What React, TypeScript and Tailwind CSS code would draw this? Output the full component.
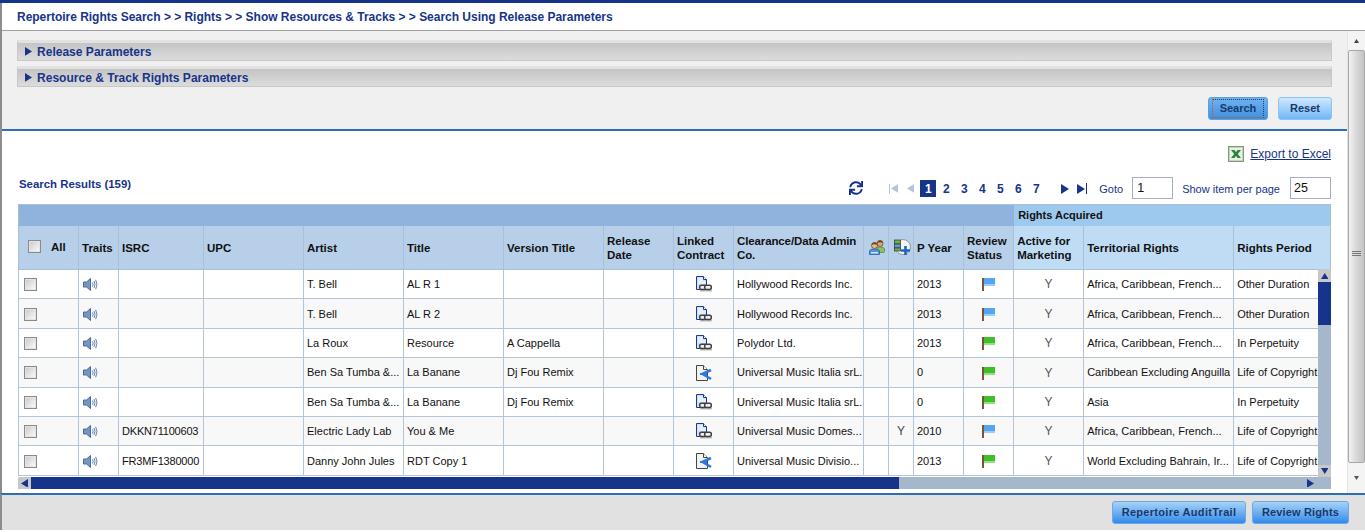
import { FaSync } from "react-icons/fa";

const NAVY = "#16348a";

const widths = [
  "w-[61px]", "w-[40px]", "w-[85px]", "w-[100px]", "w-[100px]", "w-[100px]", "w-[100px]", "w-[70px]", "w-[60px]",
  "w-[130px]", "w-[25px]", "w-[25px]", "w-[50px]", "w-[50px]", "w-[70px]", "w-[150px]", "w-[97px]",
];

type Row = {
  h: string; isrc: string; artist: string; title: string; version: string; contract: "link" | "share"; admin: string;
  y: string; year: string; flag: "blue" | "green"; terr: string; period: string;
};

const rows: Row[] = [
  { h: "h-[29px]", isrc: "", artist: "T. Bell", title: "AL R 1", version: "", contract: "link", admin: "Hollywood Records Inc.", y: "", year: "2013", flag: "blue", terr: "Africa, Caribbean, French...", period: "Other Duration" },
  { h: "h-[30px] [&>td]:pt-[1px]", isrc: "", artist: "T. Bell", title: "AL R 2", version: "", contract: "link", admin: "Hollywood Records Inc.", y: "", year: "2013", flag: "blue", terr: "Africa, Caribbean, French...", period: "Other Duration" },
  { h: "h-[29px]", isrc: "", artist: "La Roux", title: "Resource", version: "A Cappella", contract: "link", admin: "Polydor Ltd.", y: "", year: "2013", flag: "green", terr: "Africa, Caribbean, French...", period: "In Perpetuity" },
  { h: "h-[30px]", isrc: "", artist: "Ben Sa Tumba &...", title: "La Banane", version: "Dj Fou Remix", contract: "share", admin: "Universal Music Italia srL.", y: "", year: "0", flag: "green", terr: "Caribbean Excluding Anguilla", period: "Life of Copyright" },
  { h: "h-[29px]", isrc: "", artist: "Ben Sa Tumba &...", title: "La Banane", version: "Dj Fou Remix", contract: "link", admin: "Universal Music Italia srL.", y: "", year: "0", flag: "green", terr: "Asia", period: "In Perpetuity" },
  { h: "h-[29px]", isrc: "DKKN71100603", artist: "Electric Lady Lab", title: "You & Me", version: "", contract: "link", admin: "Universal Music Domes...", y: "Y", year: "2010", flag: "blue", terr: "Africa, Caribbean, French...", period: "Life of Copyright" },
  { h: "h-[30px] [&>td]:pt-[1px]", isrc: "FR3MF1380000", artist: "Danny John Jules", title: "RDT Copy 1", version: "", contract: "share", admin: "Universal Music Divisio...", y: "", year: "2013", flag: "green", terr: "World Excluding Bahrain, Ir...", period: "Life of Copyright" },
];

function Speaker() {
  return (
    <svg width="15" height="13" viewBox="0 0 15 13" className="block">
      <path d="M0.5 4H3.5L7.5 0.5V12.5L3.5 9H0.5Z" fill="#7596c2" stroke="#4a6a9c" strokeWidth="1" />
      <path d="M9.5 4.5Q10.7 6.5 9.5 8.5M11 3Q13 6.5 11 10M12.7 1.8Q15.2 6.5 12.7 11.2" fill="none" stroke="#5f82b3" strokeWidth="1" />
    </svg>
  );
}

function DocIcon({ share }: { share: boolean }) {
  if (share) {
    return (
      <svg width="16" height="16" viewBox="0 0 16 16" className="block">
        <path d="M0.5 0.5H7.5L11.5 4.5V15.5H0.5Z" fill="#f2f2f2" stroke="#444" strokeWidth="1" />
        <path d="M7.5 0.5V4.5H11.5" fill="#fff" stroke="#444" strokeWidth="1" />
        <path d="M15 5L6.5 9L15 14" fill="none" stroke="#2f78e0" strokeWidth="2.6" />
        <path d="M4 9H11" fill="none" stroke="#2f78e0" strokeWidth="2" />
      </svg>
    );
  }
  return (
    <svg width="16" height="16" viewBox="0 0 16 16" className="block">
      <path d="M0.5 0.5H7.5L10.5 3.5V13.5H0.5Z" fill="#cfe1f7" stroke="#1b3a8f" strokeWidth="1" />
      <path d="M2 2H7V5H9.5V8H2Z" fill="#e6f0fb" />
      <path d="M7.5 0.5V3.5H10.5" fill="#fff" stroke="#1b3a8f" strokeWidth="1" />
      <rect x="4" y="14" width="12" height="1.5" fill="#bdbdbd" />
      <g fill="#eee" stroke="#3f3f3f" strokeWidth="1.5">
        <rect x="3.7" y="9.2" width="6.6" height="4.2" rx="1.6" />
        <rect x="8.7" y="9.2" width="6.6" height="4.2" rx="1.6" />
      </g>
    </svg>
  );
}

function Flag({ color }: { color: "blue" | "green" }) {
  return (
    <svg width="13" height="14" viewBox="0 0 13 14" className="block">
      <rect x="0" y="1" width="2" height="13" fill="#7a5534" />
      <rect x="2" y="1" width="11" height="8" fill={color === "blue" ? "#55a6f2" : "#3fbf2a"} />
      <rect x="2" y="7" width="11" height="2" fill={color === "blue" ? "#9ccdf7" : "#93e07e"} />
    </svg>
  );
}

function People() {
  return (
    <svg width="16" height="15" viewBox="0 0 16 15" className="block">
      <circle cx="11" cy="3.5" r="3" fill="#d8a878" stroke="#6e4524" strokeWidth="0.8" />
      <path d="M8 3Q9 0 11 0.5Q14 0.5 14 3Q11 1.5 8 3Z" fill="#6e4524" />
      <path d="M7.5 12.5V9Q7.5 7 11 7Q15.5 7 15.5 9V11.5Q15.5 12.5 14 12.5Z" fill="#94bd5e" stroke="#5c8a36" strokeWidth="0.8" />
      <circle cx="5.5" cy="5.5" r="3" fill="#e8b98a" stroke="#6e4524" strokeWidth="0.8" />
      <path d="M2.5 5Q3 2 5.5 2.5Q8.5 2.5 8.5 5Q5.5 3.5 2.5 5Z" fill="#6e4524" />
      <path d="M0.5 14.5V11Q0.5 9 5.5 9Q10.5 9 10.5 11V14.5Z" fill="#4f95e2" stroke="#2a5fa8" strokeWidth="0.8" />
      <path d="M2 12H9V13.5H2Z" fill="#cfe4fa" />
    </svg>
  );
}

function AddMap() {
  return (
    <svg width="17" height="17" viewBox="0 0 17 17" className="block">
      <circle cx="9" cy="8" r="7.5" fill="#f4f4f4" stroke="#888" strokeWidth="0.8" />
      <rect x="0.5" y="1" width="6" height="4" fill="#6fb24a" stroke="#333" strokeWidth="0.7" />
      <rect x="0.5" y="5" width="6" height="4" fill="#5e9ad8" stroke="#333" strokeWidth="0.7" />
      <rect x="0.5" y="9" width="6" height="3" fill="#6fb24a" stroke="#333" strokeWidth="0.7" />
      <path d="M11.5 7V16M7 11.5H16" stroke="#1e64c0" strokeWidth="2.6" />
    </svg>
  );
}

function Excel() {
  return (
    <svg width="16" height="16" viewBox="0 0 16 16" className="block">
      <rect x="0" y="0" width="16" height="16" fill="#7c9a76" />
      <rect x="1" y="1" width="14" height="14" fill="#c3d6bb" />
      <rect x="2" y="2" width="12" height="12" fill="#e9f1e5" />
      <path d="M3 4H6.5L8 6.3L9.5 4H13L9.8 8L13 12H9.5L8 9.7L6.5 12H3L6.2 8Z" fill="#2d8440" />
    </svg>
  );
}

function Tri({ dir, fill, size = 8 }: { dir: "l" | "r" | "u" | "d"; fill: string; size?: number }) {
  const d = { l: "M8 0V10L0 5Z", r: "M0 0V10L8 5Z", u: "M0 8H10L5 0Z", d: "M0 0H10L5 8Z" }[dir];
  const vb = dir === "l" || dir === "r" ? "0 0 8 10" : "0 0 10 8";
  const w = dir === "l" || dir === "r" ? size : size * 1.25;
  const h = dir === "l" || dir === "r" ? size * 1.25 : size;
  return (
    <svg width={w} height={h} viewBox={vb} className="block">
      <path d={d} fill={fill} />
    </svg>
  );
}

function Accordion({ label }: { label: string }) {
  return (
    <div className="flex h-[21px] items-center border border-[#c8c8c8] border-t-[3px] border-t-[#e2e2e2] bg-gradient-to-b from-[#c4c4c4] to-[#dcdcdc] pl-[7px]">
      <Tri dir="r" fill={NAVY} size={7} />
      <span className="ml-[5px] text-[12px] font-bold tracking-[0.02px] text-[#16348a]">{label}</span>
    </div>
  );
}

function Check({ className = "" }: { className?: string }) {
  return (
    <input
      type="checkbox"
      aria-label="select"
      className={`block h-[13px] w-[13px] appearance-none border border-[#8a8a8a] bg-gradient-to-br from-[#c8c8c8] to-[#ffffff] shadow-[inset_0_0_0_1px_#e4e4e4] ${className}`}
    />
  );
}

const th = "border-r border-b border-[#a9c0da] px-[3px] text-left align-middle font-bold text-[11.5px] leading-[14px] text-[#111]";
const td = "border-r border-b border-[#b5c5d8] px-[3px] align-middle whitespace-nowrap overflow-hidden";

export default function App() {
  return (
    <div className="flex h-[532px] w-[1365px] flex-col overflow-hidden border-t-[3px] border-t-[#16348a] bg-white font-['Liberation_Sans',Arial,sans-serif] text-[11px] text-[#111]">
      <div className="flex min-h-0 flex-1 flex-col border-l-2 border-l-[#8c8c8c]">
        <div className="flex h-[28px] shrink-0 items-center border-b border-b-[#a0a0a0] pl-[15px] text-[12px] font-bold tracking-[-0.02px] text-[#16348a]">
          Repertoire Rights Search &gt; &gt; Rights &gt; &gt; Show Resources &amp; Tracks &gt; &gt; Search Using Release Parameters
        </div>
        <div className="flex min-h-0 flex-1">
          <div className="flex min-w-0 flex-1 flex-col">
            <div className="h-[100px] shrink-0 border-b-2 border-b-[#2f6db5] bg-[#f0f0f0] pl-[15px] pr-[15px] pt-[9px]">
              <div className="flex flex-col gap-[5px]">
                <Accordion label="Release Parameters" />
                <Accordion label="Resource & Track Rights Parameters" />
              </div>
              <div className="mt-[10px] flex justify-end gap-[10px]">
                <button className="relative h-[23px] w-[60px] rounded-[3px] border border-[#5c9fe0] bg-gradient-to-b from-[#6fb2ef] to-[#3f8fe2] text-[11px] font-bold text-[#173a6b]">
                  Search
                  <span className="absolute inset-x-[3px] inset-y-[1px] border border-dotted border-[#1f3f70] border-b-[#c8560a] border-l-[#c8560a]" />
                </button>
                <button className="h-[23px] w-[54px] rounded-[3px] border border-[#8cc4f5] bg-gradient-to-b from-[#cfe8fc] to-[#6fb8f6] text-[11px] font-bold text-[#173a6b]">
                  Reset
                </button>
              </div>
            </div>

            <div className="min-h-0 flex-1 pl-[16px] pr-[16px]">
              <div className="flex h-[31px] items-end justify-end gap-[6px] pr-0">
                <Excel />
                <a className="text-[12px] font-normal leading-[16px] text-[#16348a] underline">Export to Excel</a>
              </div>
              <div className="flex h-[42px] items-start pt-[15px]">
                <span className="ml-[1px] text-[11.4px] font-bold leading-[14px] text-[#16348a]">Search Results (159)</span>
                <div className="flex-1" />
                <FaSync className="mr-[26px] mt-[4px] text-[14px] text-[#16348a]" />
                <div className="mt-[3px] flex h-[17px] items-center text-[12px] font-bold text-[#16348a]">
                  <span className="mr-[9px] flex items-center">
                    <span className="mr-[1px] h-[10px] w-[1px] bg-[#b9c3db]" />
                    <Tri dir="l" fill="#b9c3db" size={7} />
                  </span>
                  <span className="mr-[6px]"><Tri dir="l" fill="#b9c3db" size={7} /></span>
                  <span className="mr-[1px] flex h-[17px] w-[16px] items-center justify-center bg-[#16348a] text-white">1</span>
                  {["2", "3", "4", "5", "6", "7"].map((n) => (
                    <span key={n} className="w-[18px] text-center">{n}</span>
                  ))}
                  <span className="ml-[16px]"><Tri dir="r" fill={NAVY} size={8} /></span>
                  <span className="ml-[8px] flex items-center">
                    <Tri dir="r" fill={NAVY} size={8} />
                    <span className="ml-[1px] h-[11px] w-[1px] bg-[#16348a]" />
                  </span>
                </div>
                <span className="ml-[12px] mt-[4px] leading-[16px] text-[#16348a]">Goto</span>
                <input readOnly value="1" aria-label="Goto" className="ml-[9px] h-[22px] w-[41px] border border-[#a9a9c9] bg-white px-[4px] text-[12.5px] text-[#111]" />
                <span className="ml-[9px] mt-[4px] leading-[16px] text-[#16348a]">Show item per page</span>
                <input readOnly value="25" aria-label="Show item per page" className="ml-[10px] h-[22px] w-[41px] border border-[#a9a9c9] bg-white px-[3px] text-[12.5px] text-[#111]" />
              </div>

              <div className="relative h-[285px] w-[1313px] overflow-hidden">
                <table className="w-[1313px] table-fixed border-separate border-spacing-0">
                  <colgroup>
                    {widths.map((w, i) => (
                      <col key={i} className={w} />
                    ))}
                  </colgroup>
                  <thead>
                    <tr className="h-[22px]">
                      <th colSpan={14} className="border-l border-t border-[#a9c0da] bg-[#8fb3dc]" />
                      <th colSpan={3} className="border-t border-r border-[#a9c0da] bg-[#9dc9ee] px-[4px] text-left text-[11px] font-bold text-[#111]">
                        Rights Acquired
                      </th>
                    </tr>
                    <tr className="h-[44px] bg-[#b8cfe9]">
                      <th className={`${th} border-l border-l-[#a9c0da] pl-[9px]`}>
                        <div className="flex items-center gap-[10px] pb-[2px]">
                          <Check />
                          <span>All</span>
                        </div>
                      </th>
                      <th className={`${th} whitespace-nowrap`}>Traits</th>
                      <th className={th}>ISRC</th>
                      <th className={th}>UPC</th>
                      <th className={th}>Artist</th>
                      <th className={th}>Title</th>
                      <th className={th}>Version Title</th>
                      <th className={th}>Release Date</th>
                      <th className={th}>Linked Contract</th>
                      <th className={`${th} tracking-[-0.12px]`}>Clearance/Data Admin Co.</th>
                      <th className={`${th} !pl-[5px] !pr-0`}><People /></th>
                      <th className={`${th} !pl-[5px] !pr-0`}><AddMap /></th>
                      <th className={th}>P Year</th>
                      <th className={th}>Review Status</th>
                      <th className={`${th} bg-[#c0dcf5]`}>Active for Marketing</th>
                      <th className={`${th} bg-[#c0dcf5]`}>Territorial Rights</th>
                      <th className={`${th} bg-[#c0dcf5]`}>Rights Period</th>
                    </tr>
                  </thead>
                  <tbody>
                    {rows.map((r, i) => (
                      <tr key={i} className={`${r.h} ${i % 2 === 1 ? "bg-[#f8f8f8]" : "bg-white"}`}>
                        <td className={`${td} border-l border-l-[#b5c5d8] pl-[5px]`}><Check /></td>
                        <td className={`${td} pl-[4px]`}><Speaker /></td>
                        <td className={`${td} tracking-[-0.2px]`}>{r.isrc}</td>
                        <td className={td} />
                        <td className={td}>{r.artist}</td>
                        <td className={td}>{r.title}</td>
                        <td className={td}>{r.version}</td>
                        <td className={td} />
                        <td className={td}>
                          <div className="flex justify-center"><DocIcon share={r.contract === "share"} /></div>
                        </td>
                        <td className={td}>{r.admin}</td>
                        <td className={td} />
                        <td className={`${td} text-center text-[12px] text-[#444]`}>{r.y}</td>
                        <td className={td}>{r.year}</td>
                        <td className={td}>
                          <div className="flex justify-center"><Flag color={r.flag} /></div>
                        </td>
                        <td className={`${td} text-center text-[12px] text-[#555]`}>Y</td>
                        <td className={td}>{r.terr}</td>
                        <td className={td}>{r.period}</td>
                      </tr>
                    ))}
                  </tbody>
                </table>

                {/* inner vertical scrollbar */}
                <div className="absolute right-0 top-[65px] flex h-[208px] w-[13px] flex-col bg-[#a5b7ca]">
                  <div className="flex h-[13px] items-center justify-center bg-[#c8c8c8]"><Tri dir="u" fill={NAVY} size={6} /></div>
                  <div className="h-[43px] bg-[#16348a]" />
                  <div className="flex-1" />
                  <div className="flex h-[12px] items-center justify-center bg-[#c8c8c8]"><Tri dir="d" fill={NAVY} size={6} /></div>
                </div>
                {/* inner horizontal scrollbar */}
                <div className="absolute bottom-0 left-0 flex h-[12px] w-[1313px] items-stretch bg-[#a5b7ca]">
                  <div className="flex w-[13px] items-center justify-center bg-[#c8c8c8]"><Tri dir="l" fill={NAVY} size={7} /></div>
                  <div className="w-[868px] bg-[#16348a]" />
                  <div className="flex-1" />
                  <div className="flex w-[25px] items-center pl-[1px]"><Tri dir="r" fill={NAVY} size={7} /></div>
                </div>
              </div>
            </div>
          </div>

          {/* page scrollbar */}
          <div className="flex w-[18px] shrink-0 flex-col border-l border-l-[#e4e4e4] bg-[#f4f4f4]">
            <div className="flex h-[19px] items-center justify-center"><Tri dir="u" fill="#444" size={4} /></div>
            <div className="relative flex-1 rounded-[2px] border border-[#a8a8a8] bg-gradient-to-r from-[#f2f2f2] via-[#d8d8d8] to-[#c4c4c4]">
              <div className="absolute left-[3px] right-[3px] top-[200px] flex flex-col gap-[1px]">
                <div className="h-[1px] bg-[#777]" />
                <div className="h-[1px] bg-[#777]" />
                <div className="h-[1px] bg-[#777]" />
              </div>
            </div>
            <div className="flex h-[30px] items-center justify-center"><Tri dir="d" fill="#555" size={4} /></div>
          </div>
        </div>
      </div>
      <div className="flex h-[37px] shrink-0 items-start justify-end gap-[6px] border-t-2 border-l-2 border-t-[#2f6db5] border-l-[#8c8c8c] bg-[#e1e1e1] pr-[16px] pt-[6px]">
        <button className="h-[23px] w-[134px] rounded-[3px] border border-[#6aa9e4] bg-gradient-to-b from-[#a6d2f7] to-[#2f8ae8] text-[11px] font-bold tracking-[0.3px] text-[#173a6b]">
          Repertoire AuditTrail
        </button>
        <button className="h-[23px] w-[97px] rounded-[3px] border border-[#6aa9e4] bg-gradient-to-b from-[#a6d2f7] to-[#2f8ae8] text-[11px] font-bold tracking-[0.15px] text-[#173a6b]">
          Review Rights
        </button>
      </div>
      <div className="h-[2px] shrink-0 bg-white" />
    </div>
  );
}
